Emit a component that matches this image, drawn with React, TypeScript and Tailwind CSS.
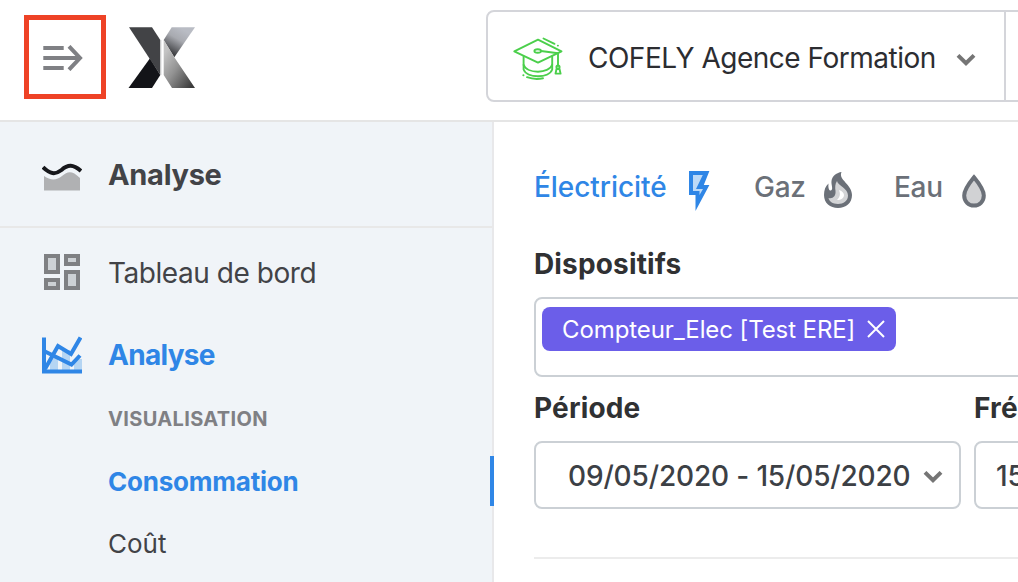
import type { ReactNode } from "react";

function Logo() {
  return (
    <svg className="h-[62px] w-[67px]" viewBox="0 0 67 62">
      <defs>
        <linearGradient id="topRight" x1="0.65" y1="0.1" x2="0.2" y2="0.85">
          <stop offset="0" stopColor="#b9bcc4" />
          <stop offset="0.4" stopColor="#a8aab0" />
          <stop offset="1" stopColor="#3c3d40" />
        </linearGradient>
        <linearGradient id="bottomRight" x1="0.1" y1="0.2" x2="0.85" y2="1">
          <stop offset="0" stopColor="#c4c4c4" />
          <stop offset="0.45" stopColor="#929292" />
          <stop offset="1" stopColor="#3b3b3b" />
        </linearGradient>
      </defs>
      <path d="M22 31.3 32.3 48 24 61H0.5z" fill="#131418" />
      <path d="M1 0.3H24L32.3 13V48z" fill="#424346" />
      <path d="M32.6 13H33.4V48H32.6z" fill="#cfcfd1" />
      <path d="M43.7 0.3H67L46.3 30.3 35.7 13z" fill="url(#topRight)" />
      <path d="M35.7 13 46.3 30.3 67 61H44L35.7 48z" fill="url(#bottomRight)" />
    </svg>
  );
}

function Chevron() {
  return (
    <svg className="h-3 w-5 shrink-0" viewBox="0 0 20 12" fill="none" stroke="#757575" strokeWidth="4">
      <path d="M2 1.4 10 9.2 18 1.4" />
    </svg>
  );
}

function GraduationCap() {
  return (
    <svg
      className="h-[44px] w-[50px] shrink-0"
      viewBox="0 0 50 44"
      fill="none"
      stroke="#4bcf4b"
      strokeWidth="1.9"
      strokeLinejoin="round"
      strokeLinecap="round"
    >
      <path d="M1.3 14.3 25 2.6 48.5 14.3 25 25.6z" />
      <ellipse cx="24.7" cy="14" rx="3.3" ry="1.8" />
      <path d="M28 14 45 16.2V29" />
      <path d="M10.6 19.5V32.5C14 41.5 36 41.5 39.2 32.5V19.5" />
      <path d="M10.6 27.8C14 37 36 37 39.2 27.8" />
      <circle cx="45" cy="30" r="1.6" />
      <path d="M43.5 32H46.5L47.6 36.6H42.5z" />
      <path d="M30.5 1.5 41.5 6.8M44.8 8.6H45M10.3 38.2H10.5M14 40.2C19 42 25 42.3 30 41.3" />
    </svg>
  );
}

function AreaIcon() {
  return (
    <svg className="h-8 w-10" viewBox="0 0 40 32" fill="none">
      <path d="M2 15C9 20 15 19 20 15 26 10 30 9.5 38 17V29.5H2z" fill="#b0b1b3" />
      <path d="M1 6.2C8 13 13 14 19.5 9 26 3.3 31 3.3 39 10" stroke="#17181c" strokeWidth="4" />
    </svg>
  );
}

function DashboardIcon() {
  return (
    <svg className="h-9 w-9" viewBox="0 0 36 36" fill="#cdd1d5" stroke="#7f8083" strokeWidth="4">
      <path d="M2 2H14V18H2zM22 2H34V10H22zM2 26H14V34H2zM22 18H34V34H22z" />
    </svg>
  );
}

function ChartIcon() {
  return (
    <svg className="h-[38px] w-10" viewBox="0 0 40 38" fill="none" stroke="#2f86e6" strokeWidth="4">
      <path d="M8 22H16V34H8zM20 14H28V34H20zM32 23H40V34H32z" fill="#b5d5f3" stroke="none" />
      <path d="M2 1.5V35.5H40" />
      <path d="M3 33 16 10 29 18 38.5 1.5" />
      <path d="M3 15.5 29.5 28.5 38 19.5" />
    </svg>
  );
}

function BoltIcon() {
  return (
    <svg className="h-10 w-[21px]" viewBox="0 0 21 40">
      <path d="M0 0H20.4L14.8 14H20.4L6.5 40V24H0z" fill="#2f86e6" />
      <path d="M4 4H13.8L7 18H14L10.5 24V20H4z" fill="#bedaf7" />
    </svg>
  );
}

function FlameIcon() {
  return (
    <svg className="h-9 w-7" viewBox="0 0 28 36">
      <path
        d="M17.5 0C14 8 28 12 28 23 28 31 22 36 14 36 6 36 0 31 0 23 0 18 1.5 14 4.5 11.5 4 16 5 19 7 18.5 9.5 17 7 13 7.5 9 8 4 13 0.5 17.5 0z"
        fill="#6b7078"
      />
      <path
        d="M13 9C14 14 24 16 24 23.5 24 29 19.5 32 14 32 8.5 32 5 29 4.5 26 9 27 12 24 11.5 19 11 15 11 12 13 9z"
        fill="#d3d4d6"
      />
      <path d="M15 18C22 20 22 28 13 28 17 24 16 21 15 18z" fill="#ffffff" />
    </svg>
  );
}

function DropIcon() {
  return (
    <svg className="h-[34px] w-6" viewBox="0 0 24 34">
      <path
        d="M12 3.3C6.5 10 2.2 16 2.2 21.5 2.2 27.5 6.5 31.6 12 31.6S21.8 27.5 21.8 21.5C21.8 16 17.5 10 12 3.3z"
        fill="#d1d2d4"
        stroke="#6b7078"
        strokeWidth="4"
      />
    </svg>
  );
}

function NavItem({ icon, children }: { icon: ReactNode; children: ReactNode }) {
  return (
    <div className="flex h-[82px] items-center">
      <div className="flex w-[124px] shrink-0 justify-center">{icon}</div>
      <div className="-ml-4">{children}</div>
    </div>
  );
}

export default function App() {
  return (
    <div className="flex h-[582px] w-[1018px] flex-col overflow-hidden bg-white font-['Inter',sans-serif] whitespace-nowrap">
      <header className="flex h-[122px] shrink-0 items-start border-b-2 border-[#e5e5e5]">
        <button className="mt-[15px] ml-6 flex h-[84px] w-[82px] shrink-0 items-center justify-center border-[5px] border-[#ee4226]">
          <svg className="mt-0.5 -ml-1 h-[26px] w-10 shrink-0" viewBox="0 0 40 26" fill="none" stroke="#7f8084" strokeWidth="4">
            <path d="M0.3 3H20.7M0.3 13H36M0.3 23H20.7M26 1.3 37 13 26 24.7" />
          </svg>
        </button>
        <div className="mt-[27px] ml-[22px] shrink-0">
          <Logo />
        </div>
        <div className="mt-2.5 ml-[291px] flex h-[92px] w-[560px] shrink-0 rounded-lg border-2 border-[#d4d5da]">
          <div className="flex w-[518px] shrink-0 items-center border-r-2 border-[#d4d5da] pt-[3px] pl-[25px]">
            <div className="mt-0.5">
              <GraduationCap />
            </div>
            <span className="ml-[25px] w-[368px] text-[28px] tracking-[-0.5px] text-[#2c2d31]">
              COFELY Agence Formation
            </span>
            <div className="mt-1">
              <Chevron />
            </div>
          </div>
        </div>
      </header>
      <div className="flex grow">
        <aside className="w-[494px] shrink-0 border-r-2 border-[#e8e8ea] bg-[#f0f4f8] text-[#424347]">
          <div className="h-[106px] border-b-2 border-[#e8e8e8] pt-3">
            <NavItem icon={<div className="mt-1"><AreaIcon /></div>}>
              <span className="text-[29px] font-bold tracking-[-0.3px]">Analyse</span>
            </NavItem>
          </div>
          <div className="pt-1">
            <NavItem icon={<div className="-mt-0.5"><DashboardIcon /></div>}>
              <span className="text-[28px] tracking-[-0.45px]">Tableau de bord</span>
            </NavItem>
            <NavItem icon={<div className="-mt-px"><ChartIcon /></div>}>
              <span className="text-[28px] font-bold tracking-[-0.7px] text-[#2f86e6]">Analyse</span>
            </NavItem>
          </div>
          <div className="flex h-[46px] items-center pl-[108px] text-[20px] font-bold tracking-[0.35px] text-[#7f8084]">
            VISUALISATION
          </div>
          <div className="mt-[14px] -mr-0.5 flex h-[50px] items-center border-r-4 border-[#2f86e6] pl-[108px] text-[26px] font-bold tracking-[-0.22px] text-[#2f86e6]">
            Consommation
          </div>
          <div className="mt-3 flex h-[50px] items-center pl-[108px] text-[26px]">Coût</div>
        </aside>
        <main className="w-[524px] shrink-0 overflow-hidden pl-10">
          <nav className="mt-10 flex h-[50px] items-center text-[28px] font-medium text-[#6b7078]">
            <div className="flex w-[220px] shrink-0 items-center tracking-[-0.05px] text-[#2f86e6]">
              <span className="w-[155px]">Électricité</span>
              <div className="mt-2">
                <BoltIcon />
              </div>
            </div>
            <div className="flex w-[140px] shrink-0 items-center tracking-[-0.3px]">
              <span className="w-[70px]">Gaz</span>
              <div className="mt-1.5">
                <FlameIcon />
              </div>
            </div>
            <div className="flex items-center tracking-[-0.3px]">
              <span className="w-[68px]">Eau</span>
              <div className="mt-2">
                <DropIcon />
              </div>
            </div>
          </nav>
          <h2 className="mt-8 flex h-10 items-center text-[28px] font-bold tracking-[0.15px] text-[#303133]">
            Dispositifs
          </h2>
          <div className="mt-[13px] h-20 w-[600px] rounded-lg border-2 border-[#cbd0d5] px-1.5 py-2">
            <div className="flex h-11 w-[354px] items-center rounded-lg bg-[#6b5ee9] pl-5 text-[24px] tracking-[-0.1px] text-white">
              <span className="w-[305px] pt-0.5">Compteur_Elec [Test ERE]</span>
              <svg className="h-[18px] w-[18px]" viewBox="0 0 18 18" stroke="#ffffff" strokeWidth="2">
                <path d="M1 1 17 17M17 1 1 17" />
              </svg>
            </div>
          </div>
          <div className="mt-[11px] flex h-10 w-[600px] items-center text-[28px] font-bold tracking-[0.15px] text-[#303133]">
            <h2 className="w-[440px]">Période</h2>
            <h2>Fréquence</h2>
          </div>
          <div className="mt-[13px] flex w-[700px] gap-[13px] text-[28px] font-medium tracking-[-0.15px] text-[#3c4045]">
            <div className="flex h-[68px] w-[427px] items-center rounded-lg border-2 border-[#cbd0d5] pt-0.5 pl-8">
              <span className="w-[355px]">09/05/2020 - 15/05/2020</span>
              <div className="mt-0.5">
                <Chevron />
              </div>
            </div>
            <div className="flex h-[68px] w-[200px] items-center rounded-lg border-2 border-[#cbd0d5] pt-0.5 pl-5">
              15 min
            </div>
          </div>
          <div className="mt-12 h-0.5 bg-[#ececec]" />
        </main>
      </div>
    </div>
  );
}
